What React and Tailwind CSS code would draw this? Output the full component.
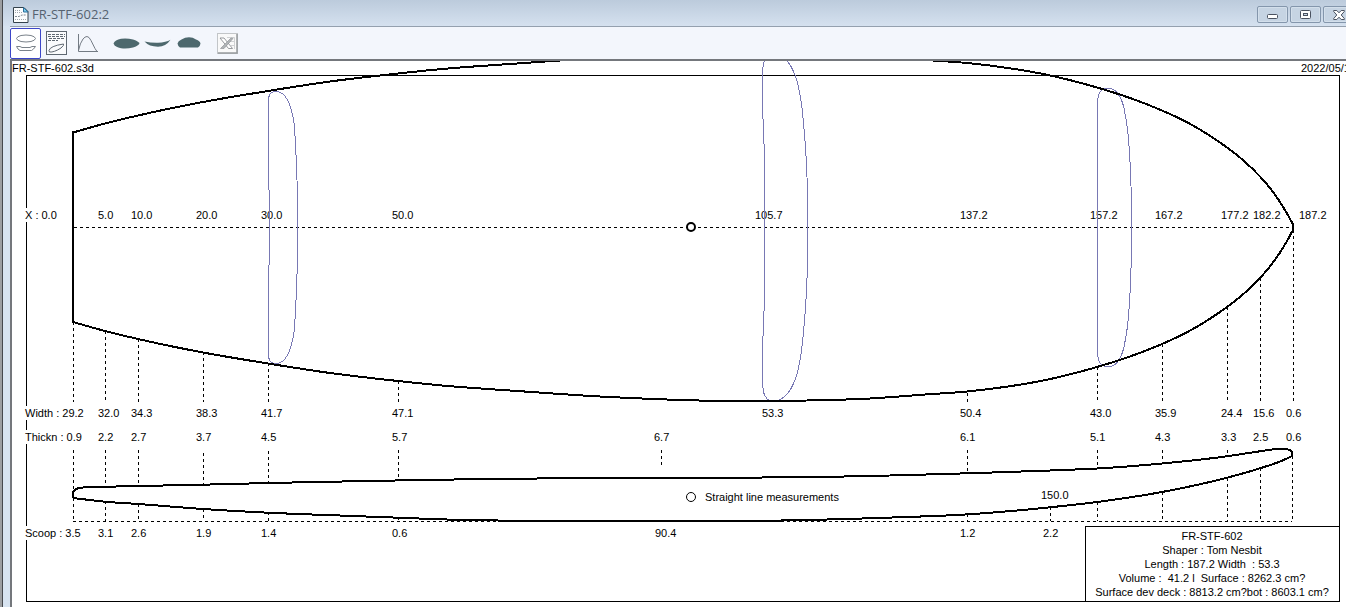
import React from "react";

// Cubic spline through the points; tangents are weighted by the neighbouring segment lengths.
const smooth = (pts) => {
  const n = pts.length;
  const dir = (a, b) => {
    const l = Math.hypot(b[0] - a[0], b[1] - a[1]) || 1;
    return [(b[0] - a[0]) / l, (b[1] - a[1]) / l, l];
  };
  const tangents = pts.map((p, i) => {
    if (i === 0) return dir(p, pts[1]);
    if (i === n - 1) return dir(pts[n - 2], p);
    const a = dir(pts[i - 1], p);
    const b = dir(p, pts[i + 1]);
    const s = a[2] + b[2];
    return [(a[0] * b[2] + b[0] * a[2]) / s, (a[1] * b[2] + b[1] * a[2]) / s];
  });
  let d = `M${pts[0][0]} ${pts[0][1]}`;
  for (let i = 0; i < n - 1; i++) {
    const [x1, y1] = pts[i];
    const [x2, y2] = pts[i + 1];
    const k = Math.hypot(x2 - x1, y2 - y1) / 3;
    const [a, b] = [tangents[i], tangents[i + 1]];
    d += `C${x1 + a[0] * k} ${y1 + a[1] * k} ${x2 - b[0] * k} ${y2 - b[1] * k} ${x2} ${y2}`;
  }
  return d;
};

const mirror = (pts, axis) => pts.map(([x, y]) => [x, 2 * axis - y]);

const rail = [
  [73, 322], [105, 331], [138, 339], [203, 352.5], [268, 363.5], [330, 373], [398, 381], [440, 385.3],
  [520, 391.2], [600, 396.5], [661, 399.3], [707, 400.7], [757, 401], [807, 400.5], [870, 398.5],
  [925, 394.5], [967, 391.5], [1008, 386.5], [1048, 379.5], [1097, 367], [1130, 356.5], [1162, 344],
  [1188, 331.7], [1208, 320], [1227, 307], [1244, 293.5], [1260, 278], [1270, 266.5], [1280, 252.5], [1287, 241], [1293, 230],
];

const deck = [
  [73, 498], [73, 492], [77, 488.7], [83, 487.5], [90, 487.2], [125, 486.3], [203, 484.7], [268, 483], [353, 481.3],
  [440, 479.7], [600, 478], [733, 477.7], [835, 476.7], [890, 475.5], [967, 473.3], [1050, 470.5],
  [1097, 468.5], [1162, 463.5], [1227, 456.3], [1260, 451.3], [1278, 449], [1288, 449.5], [1292, 451.5], [1292, 456],
];
const bottom = [
  [73, 498], [105, 501.7], [138, 504], [203, 509], [268, 512.7], [345, 515.7], [398, 517.7], [440, 519.3],
  [520, 520.8], [600, 521], [771, 520.7], [835, 519.3], [898, 517.3], [960, 514.8], [1008, 511.3], [1050, 507.3],
  [1097, 502], [1162, 492], [1227, 477.7], [1260, 468.3], [1283, 460.3], [1292, 456],
];

const slices = [
  [[269.5, 227], [269.5, 255], [268.5, 275], [268.5, 352], [268.5, 357], [271, 362], [277, 363.5], [283, 361], [288, 354], [293, 338], [295.5, 309], [297, 275], [297.5, 227]],
  [[764.5, 227], [764.5, 295], [762.5, 355], [762.5, 382], [763, 388], [765, 396], [770, 401], [775, 401.5], [781, 399], [788, 393], [795, 380], [801, 354], [803.5, 332], [806, 299], [807.5, 262], [807.5, 227]],
  [[1097.5, 227], [1097.5, 345], [1097.5, 352], [1100, 363], [1108, 367], [1115, 364.5], [1120, 358], [1126, 336], [1129, 309], [1131, 269], [1131.5, 227]],
];

const labels = [
  // X positions
  [25, 219, "X : 0.0"], [98, 219, "5.0"], [131, 219, "10.0"], [196, 219, "20.0"], [261, 219, "30.0"],
  [392, 219, "50.0"], [755, 219, "105.7"], [960, 219, "137.2"], [1090, 219, "157.2"], [1155, 219, "167.2"],
  [1221, 219, "177.2"], [1253, 219, "182.2"], [1299, 219, "187.2"],
  // Widths
  [25, 417, "Width : 29.2"], [98, 417, "32.0"], [131, 417, "34.3"], [196, 417, "38.3"], [261, 417, "41.7"],
  [392, 417, "47.1"], [762, 417, "53.3"], [960, 417, "50.4"], [1090, 417, "43.0"], [1155, 417, "35.9"],
  [1221, 417, "24.4"], [1253, 417, "15.6"], [1286, 417, "0.6"],
  // Thickness
  [25, 441, "Thickn : 0.9"], [98, 441, "2.2"], [131, 441, "2.7"], [196, 441, "3.7"], [261, 441, "4.5"],
  [392, 441, "5.7"], [654, 441, "6.7"], [960, 441, "6.1"], [1090, 441, "5.1"], [1155, 441, "4.3"],
  [1221, 441, "3.3"], [1253, 441, "2.5"], [1286, 441, "0.6"],
  // Scoop
  [25, 537, "Scoop : 3.5"], [98, 537, "3.1"], [131, 537, "2.6"], [196, 537, "1.9"], [261, 537, "1.4"],
  [392, 537, "0.6"], [655, 537, "90.4"], [960, 537, "1.2"], [1043, 537, "2.2"],
  [1041, 499, "150.0"], [705, 501, "Straight line measurements"],
];

// x, then start/end pairs of each dashed run
const guides = [
  [73, 322, 402, 450, 490, 498, 521], [105, 331, 402, 450, 487, 501, 521], [138, 339, 402, 450, 486, 504, 521],
  [203, 352, 402, 453, 485, 509, 521], [268, 363, 402, 451, 483, 512, 521], [398, 381, 402, 450, 480, 517, 521],
  [661, 450, 465], [967, 393, 402, 450, 473, 514, 521], [1050, 507, 521],
  [1097, 367, 402, 450, 468, 502, 521], [1162, 344, 402, 450, 463, 492, 521], [1227, 307, 402, 450, 456, 478, 521],
  [1260, 278, 402, 450, 452, 468, 521], [1293, 230, 402], [1292, 456, 521],
];

const info = [
  "FR-STF-602",
  "Shaper : Tom Nesbit",
  "Length : 187.2 Width  : 53.3",
  "Volume :  41.2 l  Surface : 8262.3 cm?",
  "Surface dev deck : 8813.2 cm?bot : 8603.1 cm?",
];

function Drawing() {
  return (
    <svg
      viewBox="12 61 1334 546"
      className="block w-full overflow-visible font-['Liberation_Sans',Arial,sans-serif] text-[11px]"
      role="img"
      aria-label="Board outline and profile"
    >
      <g fill="none" stroke="#000" shapeRendering="crispEdges">
        <rect x="26.5" y="75.5" width="1313" height="526" />
        <rect x="1085.5" y="526.5" width="254" height="75" />
      </g>
      <g fill="#fff">
        <rect x="25" y="208" width="33" height="14" />
        <rect x="25" y="406" width="40" height="14" />
        <rect x="25" y="430" width="40" height="14" />
        <rect x="25" y="526" width="40" height="14" />
      </g>
      <g fill="#000">
        <text x="12" y="72">FR-STF-602.s3d</text>
        <text x="1301" y="72">2022/05/1</text>
        {labels.map(([x, y, t]) => (
          <text key={`${x}-${y}`} x={x} y={y}>{t}</text>
        ))}
        {info.map((t, i) => (
          <text key={t} x="1212" y={540 + i * 14} textAnchor="middle" className="whitespace-pre">{t}</text>
        ))}
      </g>
      <g fill="none" stroke="#000" strokeDasharray="3 3" shapeRendering="crispEdges">
        <path d="M74 227.5H1293M73 521.5H1292" />
        {guides.map(([x, ...runs]) =>
          runs.map((y, i) =>
            i % 2 === 0 ? <path key={`${x}-${y}`} d={`M${x + 0.5} ${y}V${runs[i + 1]}`} /> : null
          )
        )}
      </g>
      <g fill="none" stroke="#7878b4" shapeRendering="crispEdges">
        {slices.map((pts) => (
          <path key={pts[0][0]} d={smooth(pts) + smooth(mirror(pts, 227.5))} />
        ))}
      </g>
      <g fill="none" stroke="#000" strokeWidth="2" shapeRendering="crispEdges">
        <path d={smooth(rail)} />
        <path d={smooth(mirror(rail, 227.25))} />
        <path d="M73 131V323M1293 223V231" />
        <path d={smooth(deck)} />
        <path d={smooth(bottom)} />
      </g>
      <circle cx="691" cy="227" r="4" fill="#fff" stroke="#000" strokeWidth="2" />
      <circle cx="691" cy="497" r="4.5" fill="#fff" stroke="#000" />
    </svg>
  );
}

function DocIcon() {
  return (
    <svg width="16" height="16" viewBox="0 0 16 16" className="shrink-0" aria-hidden="true">
      <path d="M.5 .5H11L15 4.5V15.500H.5Z" fill="#fbfdfe" stroke="#34424c" />
      <path d="M10.500 .5V5H15Z" fill="#7cd0ee" stroke="#2d6f9c" />
      <path d="M2 3.500H8M2 5.500H9M2 12.500H13" stroke="#a0a8ae" strokeDasharray="1 1" />
      <path d="M2 9.500H6L9 8H13.500" fill="none" stroke="#7f8a92" strokeDasharray="2 1" />
    </svg>
  );
}

function CaptionButton({ label, children }) {
  return (
    <button
      type="button"
      aria-label={label}
      className="flex h-[17px] w-[31px] items-center justify-center rounded-[2px] border border-[#8496ac] bg-[#c6d4e3] shadow-[inset_0_0_0_1px_#d3dfeb]"
    >
      {children}
    </button>
  );
}

function ToolButton({ label, active, className = "", children }) {
  return (
    <button
      type="button"
      aria-label={label}
      className={`flex h-[31px] shrink-0 items-center justify-center ${active ? "rounded-[2px] border border-[#3c46c8] bg-white" : ""} ${className}`}
    >
      {children}
    </button>
  );
}

export default function App() {
  return (
    <div className="flex h-screen overflow-hidden bg-[#d7e3f0]">
      <div className="w-[3px] shrink-0 border-r border-[#45484d] bg-[#9c9ea1]" />
      <div className="flex min-w-0 flex-1 flex-col">
        <header className="flex h-[26px] shrink-0 items-center bg-linear-to-b from-[#bccbdc] to-[#d5e1ef] pl-[10px] pt-[3px]">
          <DocIcon />
          <h1 className="ml-[3px] flex-1 pb-[2px] font-['Open_Sans','Noto_Sans',sans-serif] text-[13px] leading-4 text-[#566270]">FR-STF-602:2</h1>
          <div className="-mr-[8px] flex gap-[2px]">
            <CaptionButton label="Minimize">
              <svg width="11" height="5" viewBox="0 0 11 5" className="mt-[3px]"><rect x=".5" y=".5" width="10" height="4" rx="1" fill="#fff" stroke="#4a5260" /></svg>
            </CaptionButton>
            <CaptionButton label="Restore">
              <svg width="11" height="9" viewBox="0 0 11 9">
                <rect x=".5" y=".5" width="10" height="8" rx="1" fill="#fff" stroke="#4a5260" />
                <rect x="3.500" y="3.500" width="4" height="2" fill="#c9d7e6" stroke="#4a5260" />
              </svg>
            </CaptionButton>
            <CaptionButton label="Close">
              <svg width="12" height="10" viewBox="0 0 12 10">
                <path d="M.7 .5H3.800L6 2.800L8.200 .5H11.300V1.500L8.200 5L11.300 8.500V9.500H8.200L6 7.200L3.800 9.500H.7V8.500L3.800 5L.7 1.500Z" fill="#fff" stroke="#4a5260" />
              </svg>
            </CaptionButton>
          </div>
        </header>
        <div className="ml-[7px] flex min-h-0 flex-1 flex-col">
          <div className="flex h-[35px] shrink-0 items-center border-b-2 border-t border-b-[#74777c] border-t-[#94a0ae] bg-[#f3f6fc]" role="toolbar">
            <ToolButton label="Outline and profile" active className="w-[31px]">
              <svg width="22" height="20" viewBox="0 0 22 20" fill="none" stroke="#7a828a">
                <path d="M1.500 5.500Q2 3.500 6 2.500Q11 1.500 16 2.500Q20 3.500 20.500 5.500Q20 7.500 16 8.500Q11 9.500 6 8.500Q2 7.500 1.500 5.500Z" />
                <path d="M1.500 13.500H5L7 14.500H15L17 13.500H20.500L18.500 16L16.500 17.500H5L3 16Z" />
              </svg>
            </ToolButton>
            <ToolButton label="Specification sheet" className="ml-[5px] w-[21px]">
              <svg width="21" height="24" viewBox="0 0 21 24" fill="none" stroke="#5f6872">
                <rect x=".5" y=".5" width="20" height="23" fill="#fafbfd" />
                <path d="M2 3.500H19M2 5.500H19M3 7.500H18M2 9.500H12" strokeDasharray="3 1" />
                <path d="M3 19.500Q4 15 17.500 13Q18.500 14 15 17Q8 21.500 3.500 21Z" />
              </svg>
            </ToolButton>
            <ToolButton label="Curve" className="ml-[10px] w-[22px]">
              <svg width="22" height="20" viewBox="0 0 22 20" fill="none" stroke="#737b84">
                <path d="M1.500 1V18.500H21" />
                <path d="M1.500 17.500Q3 10 6 6Q8 3.500 10 3.500Q12 3.500 14 7.500L18 15.500L20 18.500" />
              </svg>
            </ToolButton>
            <ToolButton label="Outline view" className="ml-[13px] w-[28px]">
              <svg width="27" height="11" viewBox="0 0 27 11"><path d="M.5 5.500Q2 1.800 8 .7Q14 -.2 20 1.500Q25 3 26.500 5.500Q25 8 20 9.500Q14 11.200 8 10.300Q2 9.200 .5 5.500Z" fill="#4d686d" /></svg>
            </ToolButton>
            <ToolButton label="Rocker view" className="ml-[4px] w-[27px]">
              <svg width="27" height="9" viewBox="0 0 27 9"><path d="M.5 2.500Q7 4 14 3.800Q22 3.500 26.500 .8Q22 7.700 14 7.700Q5 7.700 .5 2.500Z" fill="#4d686d" /></svg>
            </ToolButton>
            <ToolButton label="Slice view" className="ml-[6px] w-[24px]">
              <svg width="24" height="11" viewBox="0 0 24 11" className="-mt-[2px]"><path d="M.5 6.500Q1 4 4.500 2.500Q8 .3 12 .3Q16 .3 19 2.500Q23 4 23.500 6.500Q23.300 9 21 10.500H3Q.8 9 .5 6.500Z" fill="#4d686d" /></svg>
            </ToolButton>
            <ToolButton label="Export to spreadsheet" className="ml-[16px] w-[21px]">
              <svg width="21" height="21" viewBox="0 0 21 21">
                <rect x=".5" y=".5" width="20" height="20" fill="#f9f9f9" stroke="#c2c5c8" />
                <path d="M20 1V20H1" fill="none" stroke="#969a9d" strokeWidth="1.500" />
                <path d="M10 4.500H17.500M13 8.500H17.500M14 12.500H17.500M17.500 4.500V16" fill="none" stroke="#cfd1d3" />
                <path d="M3 5H7L15.500 15.500H11.500Z" fill="#fff" stroke="#7d8286" strokeWidth=".8" />
                <path d="M14 5L3.500 15.500H7L16 5.500Z" fill="#b0b4b6" stroke="#888c90" strokeWidth=".6" />
              </svg>
            </ToolButton>
          </div>
          <main className="min-h-0 flex-1 overflow-hidden border-l-2 border-[#74777c] bg-white">
            <Drawing />
          </main>
        </div>
      </div>
    </div>
  );
}
